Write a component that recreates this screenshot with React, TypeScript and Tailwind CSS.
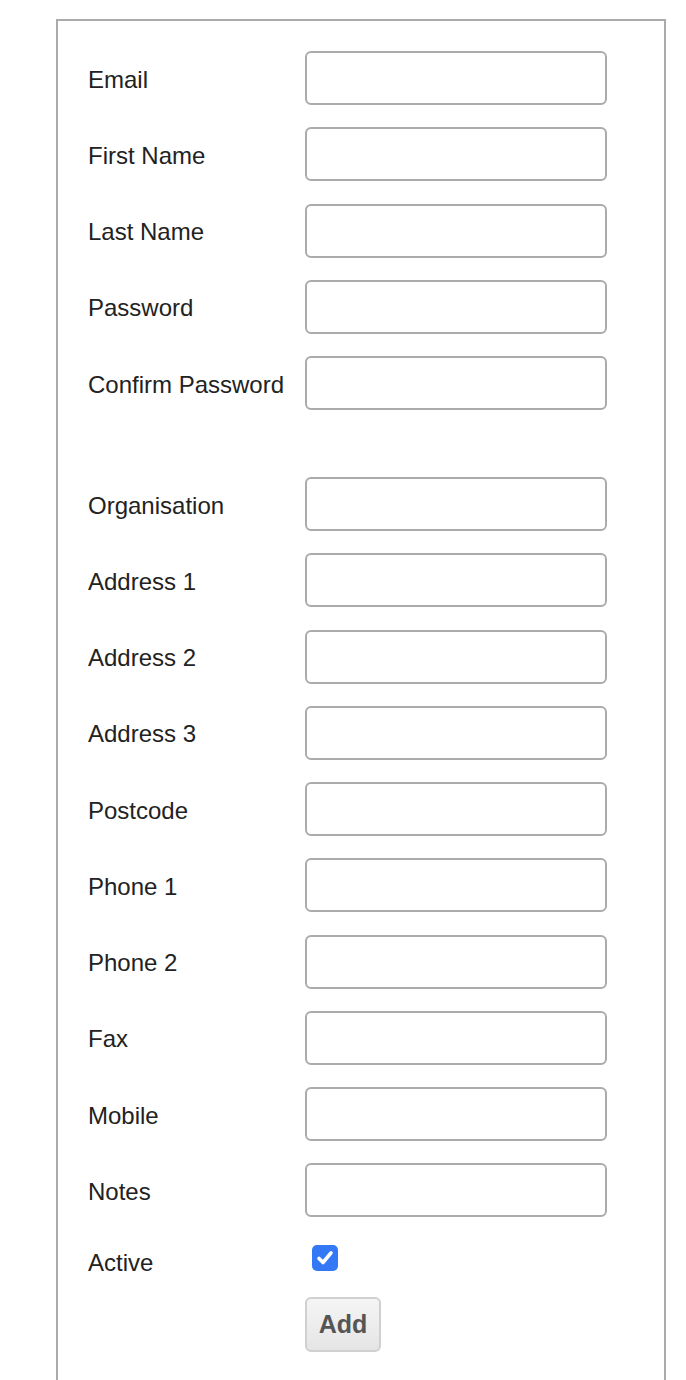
const fields = [
  "Email",
  "First Name",
  "Last Name",
  "Password",
  "Confirm Password",
  "Organisation",
  "Address 1",
  "Address 2",
  "Address 3",
  "Postcode",
  "Phone 1",
  "Phone 2",
  "Fax",
  "Mobile",
  "Notes",
];

const Row = ({ label, extra }: { label: string; extra?: boolean }) => (
  <div className={`flex items-center ${extra ? "mt-[44.75px]" : ""}`}>
    <label className="w-[217px] shrink-0 leading-[28px] pt-[3px]">{label}</label>
    <input
      type={label.includes("Password") ? "password" : "text"}
      className="w-[302px] h-[54px] border-2 border-[#ababab] rounded-[6px] bg-white px-2 outline-none"
    />
  </div>
);

export default function App() {
  return (
    <div
      className="pl-[56px] pt-[19px] bg-white text-[#222] text-[24px]"
      style={{ fontFamily: '"Liberation Sans", Arial, sans-serif' }}>
      <div className="w-[610px] min-h-[1400px] border-2 border-[#ababab] pl-[30px] pt-[30px]">
        <div className="flex flex-col gap-[22.25px]">
          {fields.map((f) => (
            <Row key={f} label={f} extra={f === "Organisation"} />
          ))}
        </div>

        <div className="flex items-start mt-[22px]">
          <label className="w-[217px] shrink-0 leading-[28px] mt-[10px]">Active</label>
          <span className="ml-[7px] mt-[6px] w-[26px] h-[26px] rounded-[5px] bg-[#3478f6] flex items-center justify-center">
            <svg width="20" height="20" viewBox="0 0 20 20" fill="none">
              <path
                d="M4 10.5 L8 14.5 L16 4.8"
                stroke="white"
                strokeWidth="3.6"
                strokeLinecap="round"
                strokeLinejoin="round"
              />
            </svg>
          </span>
        </div>

        <div className="flex mt-[20px]">
          <div className="w-[217px] shrink-0" />
          <button className="w-[76px] h-[55px] border-2 border-[#d0d0d0] rounded-[6px] bg-gradient-to-b from-[#f5f5f5] to-[#e5e5e5] font-bold text-[25px] text-[#555] leading-none">
            Add
          </button>
        </div>
      </div>
    </div>
  );
}
